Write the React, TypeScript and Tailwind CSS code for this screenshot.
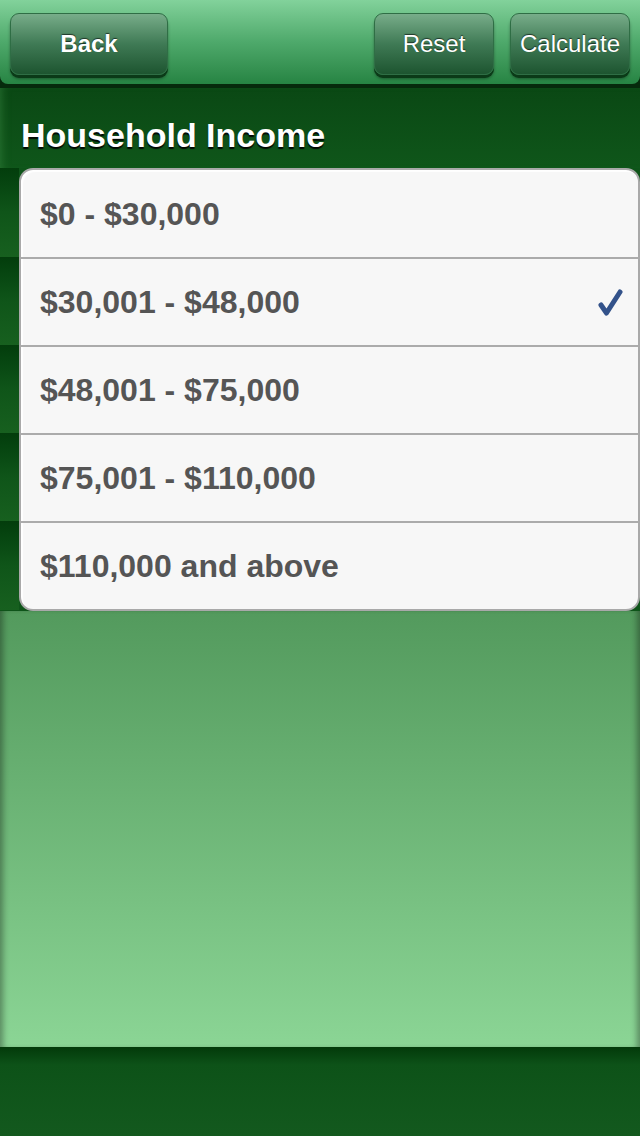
const ranges = [
  '$0 - $30,000',
  '$30,001 - $48,000',
  '$48,001 - $75,000',
  '$75,001 - $110,000',
  '$110,000 and above',
];

const selected = 1;

const HeaderButton = ({ label, className }: { label: string; className: string }) => (
  <button
    className={
      'h-[62px] rounded-[9px] border border-[#2f6e45] bg-gradient-to-b from-[#78ad8a] via-[#3f7a55] to-[#1d5530] text-[24px] text-white shadow-[0_3px_0_#0b3a18,0_4px_3px_rgba(0,0,0,0.35)] [text-shadow:0_-1px_1px_rgba(0,0,0,0.6)] ' +
      className
    }
  >
    {label}
  </button>
);

const Tick = () => (
  <svg width="28" height="30" viewBox="0 0 28 30" className="mr-[-2px]">
    <path d="M5 18 L10.5 26 L24 5" fill="none" stroke="#33528a" strokeWidth="5" strokeLinecap="round" strokeLinejoin="round" />
  </svg>
);

export default function App() {
  return (
    <div className="flex h-[1136px] w-[640px] flex-col overflow-hidden bg-[#0e5419] font-['Liberation_Sans',Arial,sans-serif]">
      {/* top toolbar */}
      <div className="bg-[#062a0c] pb-[4px]">
        <div className="flex h-[84px] items-start rounded-b-[8px] bg-gradient-to-b from-[#82d29b] via-[#4ea96b] to-[#268443] px-[10px] pt-[13px]">
          <HeaderButton label="Back" className="w-[158px] font-bold" />
          <div className="flex-1" />
          <HeaderButton label="Reset" className="w-[120px]" />
          <HeaderButton label="Calculate" className="ml-[16px] w-[120px]" />
        </div>
      </div>

      {/* section title */}
      <div className="flex h-[80px] items-center bg-gradient-to-b from-[#0a4814] to-[#0f561a] pl-[21px] pt-[14px] shadow-[inset_8px_0_8px_-6px_rgba(60,140,70,0.5)]">
        <h1 className="text-[34px] font-bold text-white [text-shadow:0_2px_1px_rgba(0,0,0,0.9)]">Household Income</h1>
      </div>

      {/* list */}
      <div className="flex">
        <div className="flex w-[19px] flex-col">
          {ranges.map((r, i) => (
            <div
              key={r}
              className={
                'bg-gradient-to-b from-[#033d0c] via-[#0f5519] to-[#17601f] ' +
                (i === 0 ? 'h-[89px]' : i === ranges.length - 1 ? 'h-[89px]' : 'h-[88px]')
              }
            />
          ))}
        </div>
        <div className="flex-1 overflow-hidden rounded-[14px] border-2 border-[#a9a9a9] bg-[#f7f7f7] shadow-[inset_2px_2px_1px_rgba(255,255,255,0.9)]">
          {ranges.map((r, i) => (
            <div
              key={r}
              className={
                'flex items-center justify-between pl-[19px] pr-[16px] ' +
                (i > 0 ? 'h-[88px] border-t-2 border-[#ababab]' : 'h-[87px]')
              }
            >
              <span className="text-[32px] font-bold text-[#555555]">{r}</span>
              {i === selected && <Tick />}
            </div>
          ))}
        </div>
      </div>

      {/* empty area */}
      <div className="flex-1 bg-gradient-to-b from-[#539a5d] to-[#8bd595] shadow-[inset_7px_0_6px_-4px_rgba(0,0,0,0.35),inset_-7px_0_6px_-4px_rgba(0,0,0,0.35)]" />

      {/* bottom bar */}
      <div className="h-[89px] bg-gradient-to-b from-[#033a0a] from-0% via-[#0d5218] via-20% to-[#13591e]" />
    </div>
  );
}
